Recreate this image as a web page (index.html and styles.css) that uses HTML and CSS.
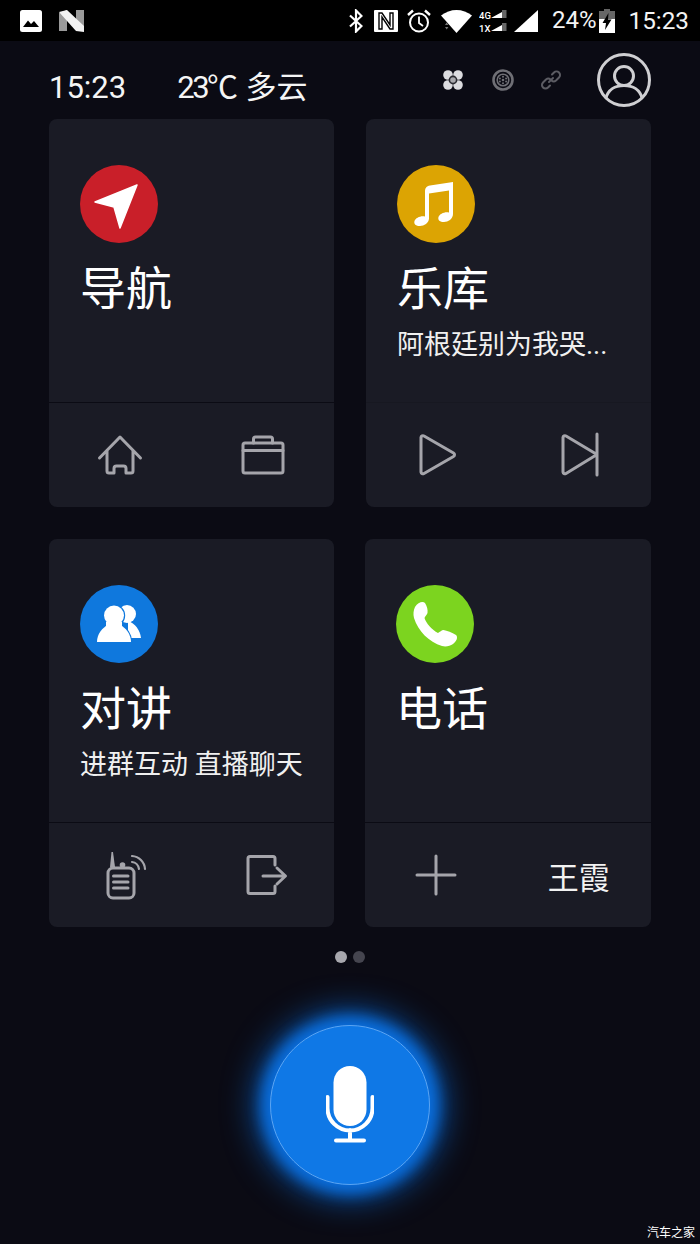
FILE: index.html
```html
<!DOCTYPE html>
<html lang="zh-CN">
<head>
<meta charset="utf-8">
<title>车载桌面</title>
<link rel="stylesheet" href="styles.css">
</head>
<body>
<div class="screen">
  <div class="statusbar">
    <div class="status-left">
      <svg class="st-img" viewBox="0 0 22 22"><rect width="22" height="22" rx="2.5" fill="#fff"/><path d="M3 17 L8 10.5 L11 14 L14 11 L19 17Z" fill="#000"/></svg>
      <svg class="st-n" viewBox="0 0 25 22"><path d="M0 3 L8 0 V21 L0 21Z M17 0 H25 V19 L17 16Z" fill="#9a9a9a"/><path d="M0 2 L8 0 L25 16 V22 L17 21Z" fill="#f2f2f2"/></svg>
    </div>
    <div class="status-right">
      <svg class="st-bt" viewBox="0 0 14 24"><path d="M1 6.5 L12.5 17 L7 22.5 V1.5 L12.5 7 L1 17.5" fill="none" stroke="#fff" stroke-width="2.2"/></svg>
      <svg class="st-nfc" viewBox="0 0 24 24"><rect y="1" width="24" height="22" rx="1" fill="#fff"/><path d="M5 20 V4 H8 L16 16 V4 H19 V20 H16 L8 8 V20Z" fill="none" stroke="#000" stroke-width="1.4"/></svg>
      <svg class="st-alarm" viewBox="0 0 24 24"><g fill="none" stroke="#fff"><circle cx="12" cy="13.5" r="9" stroke-width="2"/><path d="M12 7.5 V14 L16 17" stroke-width="1.8"/><path d="M1 6 L6 1.5 M23 6 L18 1.5" stroke-width="2.4"/></g></svg>
      <svg class="st-wifi" viewBox="0 0 31 24"><path d="M0 6.5 C9 -1 22 -1 31 6.5 L15.5 24Z" fill="#fff"/><path d="M4 16 L5.7 13.5 L7.4 16Z M4 18 L5.7 20.5 L7.4 18Z" fill="#777"/></svg>
      <svg class="st-dual" viewBox="0 0 28 24"><text x="0" y="9.500" class="st-net">4G</text><text x="0" y="23" class="st-net">1X</text><path d="M12 9 L23 3 V9Z M12 22 L23 16 V22Z" fill="#fff"/><path d="M23 1 H27.500 V9 H23Z M23 14 H27.500 V22 H23Z" fill="#666"/></svg>
      <svg class="st-signal" viewBox="0 0 24 24"><path d="M0 23 L24 1 V23Z" fill="#fff"/></svg>
      <span class="st-pct">24%</span>
      <svg class="st-batt" viewBox="0 0 16 24"><path d="M5 0 H11 V2 H16 V10 H0 V2 H5Z" fill="#666"/><path d="M0 10 H16 V24 H0Z" fill="#fff"/><path d="M9.500 4 L3.500 14 H7 L6 21 L12.500 10.500 H9Z" fill="#000"/></svg>
      <span class="st-time">15:23</span>
    </div>
  </div>

  <header class="header">
    <div class="clock">
      <span>15:23</span>
      <span class="weather"><span class="temp">23℃</span><span>多云</span></span>
    </div>
    <div class="head-icons">
      <svg class="hicon hicon-fan" viewBox="0 0 24 24"><g fill="#dcdcdf"><circle cx="7" cy="7" r="4.800"/><circle cx="17" cy="7" r="4.800"/><circle cx="7" cy="17" r="4.800"/><circle cx="17" cy="17" r="4.800"/></g><circle cx="12" cy="12" r="4.400" fill="#2a2a30"/><circle cx="12" cy="12" r="2.800" fill="#a8a8ac"/></svg>
      <svg class="hicon" viewBox="0 0 24 24"><g fill="none" stroke="#6f6f75"><circle cx="12" cy="12" r="9.500" stroke-width="2.600"/><circle cx="12" cy="12" r="5.800" stroke-width="1.600"/></g><g fill="#6f6f75"><circle cx="12" cy="12" r="1.300"/><circle cx="12" cy="8.800" r="1"/><circle cx="12" cy="15.200" r="1"/><circle cx="8.900" cy="10.400" r="1"/><circle cx="15.100" cy="10.400" r="1"/><circle cx="8.900" cy="13.600" r="1"/><circle cx="15.100" cy="13.600" r="1"/></g></svg>
      <svg class="hicon" viewBox="0 0 24 24"><g fill="none" stroke="#5c5c63" stroke-width="2" stroke-linecap="round"><path d="M10 14 L14 10"/><path d="M13 6.500 L15 4.500 A3.500 3.500 0 0 1 20 9.500 L17 12.500 A3.500 3.500 0 0 1 12.500 12.500"/><path d="M11 17.500 L9 19.500 A3.500 3.500 0 0 1 4 14.500 L7 11.500 A3.500 3.500 0 0 1 11.500 11.500"/></g></svg>
      <svg class="avatar" viewBox="0 0 54 54"><g fill="none" stroke="#cfcfd2" stroke-width="3"><circle cx="27" cy="27" r="25.500"/><circle cx="27" cy="23" r="9.500"/><path d="M9 45 C11 37 18 32.500 27 32.500 C36 32.500 43 37 45 45"/></g></svg>
    </div>
  </header>

  <main class="grid">
    <section class="card">
      <div class="card-main">
        <svg class="badge" viewBox="0 0 78 78"><circle cx="39" cy="39" r="39" fill="#c91f29"/><path d="M57 20 L15 37 L34 42 L40 63Z" fill="#fff" stroke="#fff" stroke-width="1.500" stroke-linejoin="round"/></svg>
        <h2 class="title">导航</h2>
      </div>
      <div class="card-foot">
        <div class="cell"><svg class="ficon" viewBox="0 0 48 48"><path d="M3.500 27 L24 6 L44.500 27 M11 20 V40 A2 2 0 0 0 13 42 H18 V37.500 A2.500 2.500 0 0 1 20.500 35 H27.500 A2.500 2.500 0 0 1 30 37.500 V42 H35 A2 2 0 0 0 37 40 V20"/></svg></div>
        <div class="cell"><svg class="ficon" viewBox="0 0 48 48"><rect x="4" y="12" width="40" height="30" rx="2"/><path d="M4 19.500 H44 M14.500 12 V8 A2 2 0 0 1 16.500 6 H31.500 A2 2 0 0 1 33.500 8 V12"/></svg></div>
      </div>
    </section>

    <section class="card card-shift">
      <div class="card-main card-main-faint">
        <svg class="badge" viewBox="0 0 78 78"><circle cx="39" cy="39" r="39" fill="#dca403"/><path d="M32 53.500 C32 58 27 61 23 61 C19 61 16.500 59 17.500 56 C18.500 53 23.500 50.500 28 51.500 V27 C28 23 29.500 21 33 20.500 L56 17 V49 C56 54 51 57 47 57 C43 57 40.500 55 41.500 52 C42.500 49 47.500 46.500 52 47.500 V25.500 L32 28.500Z" fill="#fff"/></svg>
        <h2 class="title">乐库</h2>
        <p class="sub">阿根廷别为我哭...</p>
      </div>
      <div class="card-foot">
        <div class="cell"><svg class="ficon" viewBox="0 0 48 48"><path d="M8 6.500 A2 2 0 0 1 11 5 L40.500 22 A2 2 0 0 1 40.500 25.500 L11 42.500 A2 2 0 0 1 8 41Z"/></svg></div>
        <div class="cell"><svg class="ficon" viewBox="0 0 48 48"><path d="M7 6.500 A2 2 0 0 1 10 5 L41 23.500 L10 42.500 A2 2 0 0 1 7 41Z M41 3 V44"/></svg></div>
      </div>
    </section>

    <section class="card">
      <div class="card-main">
        <svg class="badge" viewBox="0 0 78 78"><circle cx="39" cy="39" r="39" fill="#0f78dd"/><circle cx="47" cy="29" r="9" fill="#fff"/><path d="M48 36 C55 38 60 45 61 53 H48 V38Z" fill="#fff"/><g fill="#fff" stroke="#0f78dd" stroke-width="2.400" paint-order="stroke"><path d="M17 57 C17 49 22 43 29 39 H39 C46 43 51 49 51 57Z"/><circle cx="34" cy="30.500" r="10"/></g><path d="M26 37 H42 V44 H26Z" fill="#fff"/></svg>
        <h2 class="title">对讲</h2>
        <p class="sub">进群互动 直播聊天</p>
      </div>
      <div class="card-foot">
        <div class="cell"><svg class="ficon" viewBox="0 0 48 48"><rect x="12" y="17" width="26" height="30" rx="5"/><path d="M17.500 25 H32 M17.500 31 H32 M17.500 37 H32"/><path d="M14 16 L15.500 1 H17 L19 16Z" class="ficon-fill"/><circle cx="26.500" cy="14" r="2.800" class="ficon-fill"/><path d="M36 11 A8 8 0 0 1 43 18 M36 5 A14 14 0 0 1 49 18" stroke-width="2.200"/></svg></div>
        <div class="cell"><svg class="ficon" viewBox="0 0 48 48"><path d="M36 14 V7.500 A2 2 0 0 0 34 5.500 H11 A2 2 0 0 0 9 7.500 V40.500 A2 2 0 0 0 11 42.500 H34 A2 2 0 0 0 36 40.500 V35"/><path d="M24 25 H46 M38 17 L46.500 25 L38 33"/></svg></div>
      </div>
    </section>

    <section class="card">
      <div class="card-main">
        <svg class="badge" viewBox="0 0 78 78"><circle cx="39" cy="39" r="39" fill="#7cd41f"/><path d="M19 22 C22 17 27 16 29 18 C31 21 32 25 31.500 28 C31 30 29 31 28.500 33 C30 38 36 45 42 48 C44 47 45.500 45 47.500 45 C51 45.500 56 47.500 60 50 C62 52 61 56 57 59 C54 61 50 62 46 61 C33 57 22 46 18 33 C17 29 17.500 25 19 22Z" fill="#fff"/></svg>
        <h2 class="title">电话</h2>
      </div>
      <div class="card-foot">
        <div class="cell"><svg class="ficon" viewBox="0 0 48 48"><path d="M24 5 V43 M5 24 H43"/></svg></div>
        <div class="cell contact">王霞</div>
      </div>
    </section>
  </main>

  <div class="dots"><span class="dot dot-on"></span><span class="dot"></span></div>

  <div class="mic-wrap">
    <button class="mic" type="button" aria-label="语音">
      <svg class="mic-icon" viewBox="0 0 48 78"><rect x="7.500" y="0" width="33" height="60" rx="16.500" fill="#fff"/><path d="M1.500 31 V42 A22.500 22.500 0 0 0 46.500 42 V31 M24 64 V74 M10 74.500 H38" fill="none" stroke="#fff" stroke-width="4" stroke-linecap="round"/></svg>
    </button>
  </div>

  <div class="watermark">汽车之家</div>
</div>
</body>
</html>
```
FILE: styles.css
```css
* { box-sizing: border-box; }
html, body { margin: 0; padding: 0; background: #0b0b14; }
.screen {
  position: relative;
  width: 700px;
  height: 1244px;
  overflow: hidden;
  background: #0b0b14;
  color: #fff;
  font-family: Roboto, "Noto Sans CJK SC", sans-serif;
}

/* status bar */
.statusbar {
  height: 41px;
  background: #000;
  display: flex;
  justify-content: space-between;
  align-items: center;
  padding: 0 11px 0 20px;
}
.status-left, .status-right { display: flex; align-items: center; }
.status-left svg, .status-right svg { display: block; flex: none; }
.st-img { width: 22px; height: 22px; margin-right: 17px; }
.st-n { width: 25px; height: 22px; }
.st-bt { width: 14px; height: 24px; margin-right: 11px; }
.st-nfc { width: 24px; height: 24px; margin-right: 9px; }
.st-alarm { width: 24px; height: 24px; margin-right: 10px; }
.st-wifi { width: 31px; height: 24px; margin-right: 7px; }
.st-dual { width: 28px; height: 24px; margin-right: 7px; }
.st-net { fill: #fff; font-size: 9.5px; font-weight: 500; font-family: Roboto, sans-serif; }
.st-signal { width: 24px; height: 24px; margin-right: 14px; }
.st-pct { font-size: 24px; line-height: 43px; margin-right: 3px; color: #f4f4f4; }
.st-batt { width: 16px; height: 24px; margin-right: 13px; }
.st-time { font-size: 24.3px; line-height: 43px; color: #f4f4f4; }

/* header */
.header {
  height: 78px;
  display: flex;
  justify-content: space-between;
  align-items: center;
  padding: 0 49px;
}
.clock {
  display: flex;
  gap: 51px;
  padding-top: 16px;
  font-size: 31px;
  line-height: 36px;
  color: #f5f5f5;
}
.weather { display: flex; gap: 10px; }
.temp { letter-spacing: -2.5px; }
.head-icons { display: flex; align-items: center; gap: 24px; }
.hicon { width: 24px; height: 24px; display: block; }
.hicon-fan { margin-right: 2px; }
.avatar { width: 54px; height: 54px; display: block; margin-left: 10px; }

/* cards */
.grid {
  display: grid;
  grid-template-columns: 285px 286px;
  column-gap: 31px;
  row-gap: 32px;
  margin-left: 49px;
}
.card {
  height: 388px;
  background: #1a1b25;
  border-radius: 8px;
  display: flex;
  flex-direction: column;
}
.card-shift { margin-left: 1px; }
.card-main {
  height: 284px;
  padding: 46px 31px 0;
  border-bottom: 1px solid #0b0b14;
}
.card-main-faint { border-bottom-color: #171821; }
.badge { display: block; width: 78px; height: 78px; }
.title {
  margin: 21px 0 0;
  font-size: 46px;
  line-height: 50px;
  font-weight: 400;
  color: #fff;
}
.sub {
  margin: 13px 0 0;
  font-size: 27px;
  line-height: 36px;
  color: #f0f0f0;
  white-space: nowrap;
}
.card-foot { flex: 1; display: flex; }
.cell {
  width: 142.5px;
  display: flex;
  align-items: center;
  justify-content: center;
}
.ficon {
  width: 48px;
  height: 48px;
  display: block;
  fill: none;
  stroke: #a5a5ab;
  stroke-width: 3;
  stroke-linecap: round;
  stroke-linejoin: round;
  overflow: visible;
}
.ficon-fill { fill: #a5a5ab; stroke: none; }
.contact { font-size: 31px; color: #f2f2f2; }

/* pager */
.dots { display: flex; justify-content: center; gap: 6px; margin-top: 24px; }
.dot { width: 12px; height: 12px; border-radius: 50%; background: #45454f; }
.dot-on { background: #a8a8ae; }

/* mic */
.mic-wrap { display: flex; justify-content: center; margin-top: 62px; }
.mic {
  width: 160px;
  height: 160px;
  padding: 0;
  border-radius: 50%;
  border: 1.5px solid #5ba5f3;
  background: #0f78e6;
  box-shadow: 0 0 14px 8px #0a6ddb, 0 0 34px 12px #0a5fc0;
  display: flex;
  align-items: center;
  justify-content: center;
}
.mic-icon { width: 48px; height: 78px; display: block; }

.watermark {
  position: absolute;
  right: 5px;
  bottom: 3px;
  font-size: 12px;
  line-height: 16px;
  color: #fff;
}
```
